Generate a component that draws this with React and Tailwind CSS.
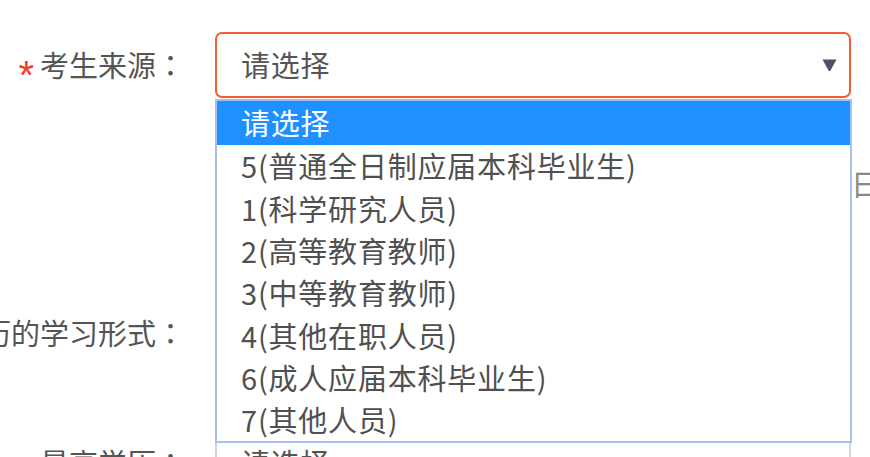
import React from 'react';

const FONT = { fontFamily: '"Microsoft YaHei", "Noto Sans CJK SC", "Noto Sans", sans-serif' };

const options = [
  '请选择',
  '5(普通全日制应届本科毕业生)',
  '1(科学研究人员)',
  '2(高等教育教师)',
  '3(中等教育教师)',
  '4(其他在职人员)',
  '6(成人应届本科毕业生)',
  '7(其他人员)',
];

/**
 * 表单行：右对齐标签 + 内容
 */
const Row = ({ label, required = false, className = '', children }) => (
  <div className={`flex items-center ${className}`}>
    <div className="w-[185px] shrink-0 flex justify-end">
      {label && (
        <span className="whitespace-nowrap text-[29px] text-[#555] flex items-center">
          {required && (
            <span className="text-[#f0401f] text-[40px] leading-none mr-[6px] inline-block translate-y-[10px] font-['Liberation_Sans']">
              *
            </span>
          )}
          {label}
          <span className="inline-block w-[29px] text-center font-['Noto_Sans_CJK_TC']">：</span>
        </span>
      )}
    </div>
    <div className="ml-[30px] flex items-center">{children}</div>
  </div>
);

const Arrow = () => (
  <svg width="15" height="13" viewBox="0 0 15 13" className="shrink-0">
    <path d="M0.5 0.5 H14.5 L8.5 11.5 Q7.5 13 6.5 11.5 Z" fill="#4b5263" />
  </svg>
);

const SelectBox = ({ active = false }) => (
  <div
    className={`w-[636px] h-[66px] rounded-[7px] border-2 bg-white flex items-center justify-between pl-[24px] pr-[12px] ${
      active ? 'border-[#f35d33]' : 'border-[#d4d4d4]'
    }`}
  >
    <span className="text-[29px] tracking-[0.8px] text-[#555]">请选择</span>
    <Arrow />
  </div>
);

export default function App() {
  return (
    <div className="relative w-[870px] h-[457px] overflow-hidden bg-white" style={FONT}>
      <div className="pt-[32px]">
        {/* 考生来源 */}
        <Row label="考生来源" required className="h-[66px]">
          <SelectBox active />
        </Row>

        {/* 第二行（被下拉框遮住） */}
        <Row label="" className="h-[66px] mt-[53px]">
          <div className="w-[636px]" />
          <span className="text-[29px] text-[#888] whitespace-nowrap">日期</span>
        </Row>

        {/* 学习形式 */}
        <Row label="获得最后学历的学习形式" className="h-[66px] mt-[83px]">
          <SelectBox />
        </Row>

        {/* 最高学历 */}
        <Row label="最高学历" className="h-[66px] mt-[64px]">
          <SelectBox />
        </Row>
      </div>

      {/* 下拉列表 */}
      <div className="absolute left-[215px] top-[99px] w-[637px] bg-white border-2 border-[#a9c1ea]">
        {options.map((opt, idx) => (
          <div
            key={idx}
            className={`flex items-center pl-[24px] text-[29px] tracking-[0.8px] whitespace-nowrap ${
              idx === 0 ? 'h-[44px] bg-[#1e90ff] text-white' : 'h-[42.3px] text-[#505050]'
            }`}
          >
            {opt}
          </div>
        ))}
      </div>
    </div>
  );
}
